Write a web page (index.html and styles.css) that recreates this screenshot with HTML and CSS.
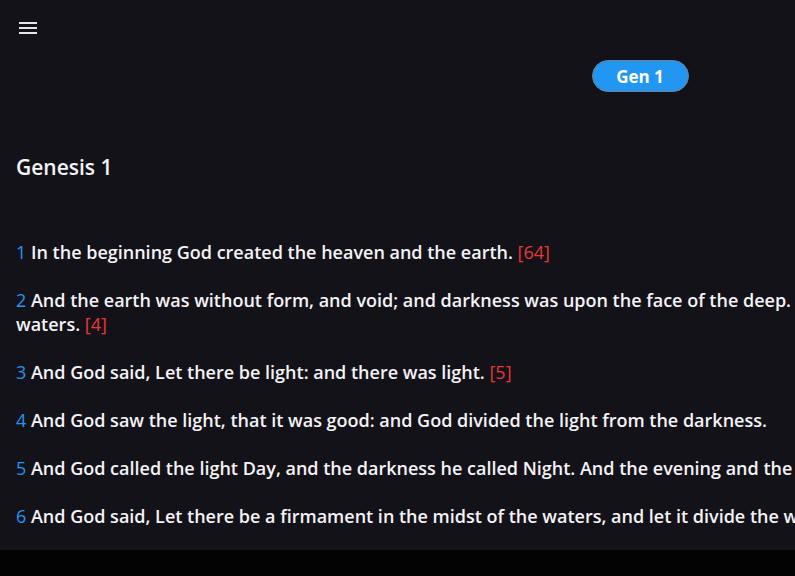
FILE: index.html
```html
<!DOCTYPE html>
<html>
<head>
<meta charset="utf-8">
<link rel="stylesheet" href="styles.css">
</head>
<body>
<div class="app">
  <header class="topbar">
    <button class="menu" aria-label="Menu">
      <svg width="18" height="14" viewBox="0 0 18 14"><rect x="0" y="0" width="18" height="2" fill="#e6e4ea"/><rect x="0" y="5" width="18" height="2" fill="#e6e4ea"/><rect x="0" y="10" width="18" height="2" fill="#e6e4ea"/></svg>
    </button>
    <div class="center">
      <button class="chip">Gen 1</button>
    </div>
  </header>
  <h1 class="title">Genesis 1</h1>
  <div class="verses">
    <p class="verse"><span class="num">1</span> In the beginning God created the heaven and the earth. <span class="ref">[64]</span></p>
    <p class="verse"><span class="num">2</span> And the earth was without form, and void; and darkness was upon the face of the deep. And the Spirit of God moved upon the face of the waters. <span class="ref">[4]</span></p>
    <p class="verse"><span class="num">3</span> And God said, Let there be light: and there was light. <span class="ref">[5]</span></p>
    <p class="verse"><span class="num">4</span> And God saw the light, that it was good: and God divided the light from the darkness.</p>
    <p class="verse"><span class="num">5</span> And God called the light Day, and the darkness he called Night. And the evening and the morning were the first day.</p>
    <p class="verse"><span class="num">6</span> And God said, Let there be a firmament in the midst of the waters, and let it divide the waters from the waters.</p>
  </div>
</div>
</body>
</html>
```
FILE: styles.css
```css
html, body {
  margin: 0;
  padding: 0;
  background: #030303;
  overflow: hidden;
}
.app {
  width: 1280px;
  height: 550px;
  background: #141219;
  color: #f4f3f6;
  font-family: "Open Sans", "DejaVu Sans", sans-serif;
  overflow: hidden;
}
.topbar {
  display: flex;
  align-items: flex-start;
  height: 136px;
  position: relative;
}
.menu {
  background: none;
  border: none;
  padding: 0;
  margin: 22px 0 0 19px;
  width: 18px;
  height: 14px;
  display: block;
}
.menu svg { display: block; }
.center {
  position: absolute;
  left: 0;
  right: 0;
  top: 60px;
  display: flex;
  justify-content: center;
}
.chip {
  width: 97px;
  height: 32px;
  border-radius: 16px;
  background: #2196f3;
  border: 1px solid #6d7f93;
  color: #fff;
  font-family: "Open Sans", "DejaVu Sans", sans-serif;
  font-weight: 700;
  font-size: 17px;
  padding: 0;
}
.title {
  margin: 17px 0 0 0;
  padding: 0 16px;
  font-size: 21px;
  font-weight: 600;
  line-height: 28px;
  height: 64px;
}
.verses {
  padding: 23px 16px 0 16px;
  width: 1240px;
}
.verse {
  margin: 0 0 24px 0;
  font-size: 18px;
  font-weight: 600;
  line-height: 24px;
}
.num {
  color: #2196f3;
  font-weight: 400;
}
.ref {
  color: #e53935;
  font-weight: 400;
}
```
